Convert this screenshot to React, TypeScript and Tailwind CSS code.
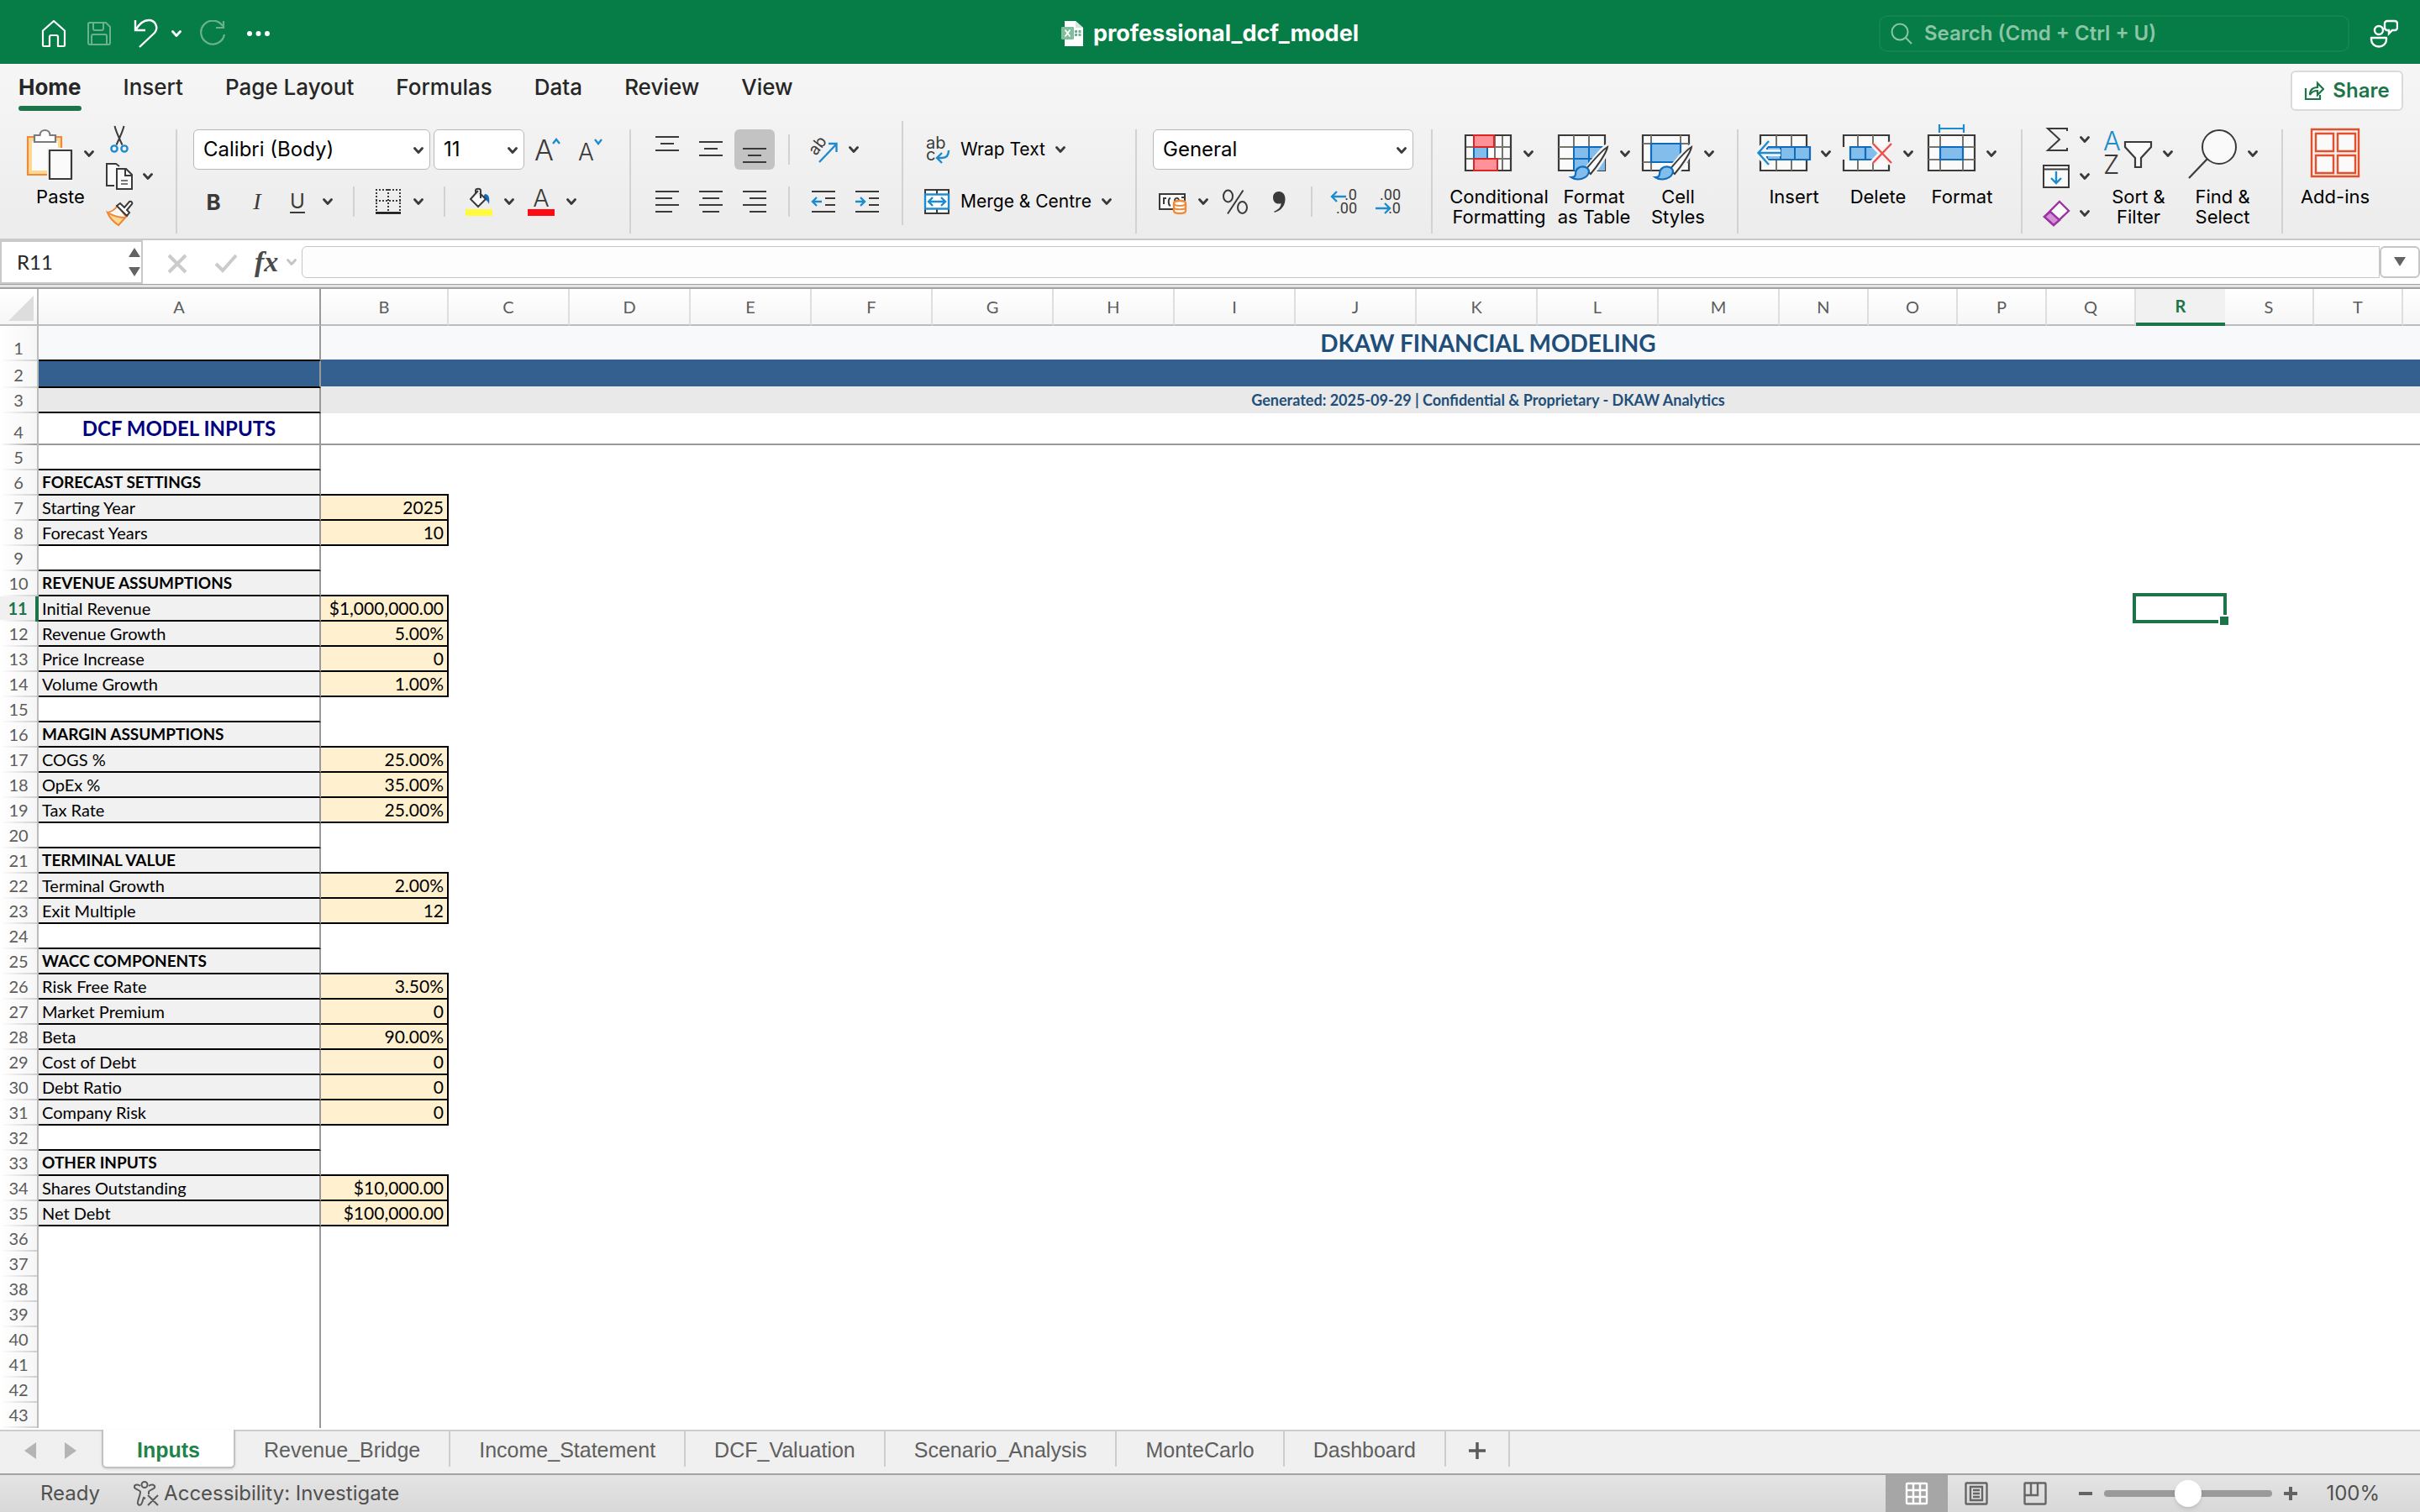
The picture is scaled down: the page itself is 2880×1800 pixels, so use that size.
import React from "react";

const INK = "#3b3a39";
const BLUE = "#1e8bcd";
const GREEN = "#1e7449";

type Kids = { children?: React.ReactNode };

/* ---------- shared pieces ---------- */

function Svg({ w = 32, h = 32, children }: { w?: number; h?: number } & Kids) {
  return (
    <svg width={w} height={h} viewBox={`0 0 ${w} ${h}`} fill="none" stroke={INK} strokeWidth={2} className="shrink-0 overflow-visible" aria-hidden="true">
      {children}
    </svg>
  );
}

function Chevron({ color = INK }: { color?: string }) {
  return (
    <svg width={12} height={10} viewBox="0 0 12 10" fill="none" stroke={color} strokeWidth={2.8} strokeLinecap="round" strokeLinejoin="round" className="shrink-0" aria-hidden="true">
      <path d="M1.500 2.500 6 7.500 10.500 2.500" />
    </svg>
  );
}

function Sep({ kind = "tall" }: { kind?: "tall" | "raised" | "short" }) {
  const cls = {
    tall: "mt-2.5 mb-1.5 w-0.5 shrink-0 bg-[#d2d2d2]",
    raised: "mb-4 w-0.5 shrink-0 bg-[#d2d2d2]",
    short: "h-9 w-0.5 shrink-0 bg-[#d2d2d2]",
  }[kind];
  return <div className={cls} />;
}

function Split({ label, children }: { label: string } & Kids) {
  return (
    <button aria-label={label} className="flex shrink-0 items-center gap-3.5">
      {children}
      <Chevron />
    </button>
  );
}

function Tool({ label, active = false, children }: { label: string; active?: boolean } & Kids) {
  return (
    <button
      aria-label={label}
      className={
        active
          ? "flex h-12 w-12 shrink-0 items-center justify-center rounded-md bg-[#c3c3c3]"
          : "flex h-12 w-12 shrink-0 items-center justify-center rounded-md"
      }
    >
      {children}
    </button>
  );
}

function Big({ lines, menu = true, wide = false, icon }: { lines: string[]; menu?: boolean; wide?: boolean; icon: React.ReactNode }) {
  return (
    <button className={wide ? "flex w-[126px] shrink-0 flex-col items-center" : "flex w-[100px] shrink-0 flex-col items-center"}>
      <span className="flex h-[78px] items-center gap-3">
        {icon}
        {menu && <Chevron />}
      </span>
      {lines.map((l) => (
        <span key={l} className="text-[22px] leading-6 whitespace-nowrap text-black">
          {l}
        </span>
      ))}
    </button>
  );
}

function Picker({ label, value, width }: { label: string; value: string; width: string }) {
  return (
    <div className={`relative shrink-0 ${width}`}>
      <select aria-label={label} defaultValue={value} className="h-12 w-full appearance-none rounded-md border border-[#b8b8b8] bg-white pl-[11px] text-2xl text-black">
        <option>{value}</option>
      </select>
      <span className="pointer-events-none absolute top-5 right-2">
        <Chevron />
      </span>
    </div>
  );
}

/* ---------- icons ---------- */

const PasteIcon = () => (
  <Svg w={56} h={72}>
    <path d="M1 16h40v45H1z" fill="#fbd993" stroke="#ee8a3a" strokeWidth={2.2} />
    <path d="M6 21h31v35H6z" fill="#fbfbfb" stroke="none" />
    <path d="M9 22v-8h6.500c0-8 12-8 12 0H34v8z" fill="#fff" stroke="#7a7a7a" strokeWidth={2.200} />
    <path d="M24 29h32v40H24z" fill="#f3f3f3" stroke="none" />
    <path d="M27 32h26v34H27z" fill="#fafafa" strokeWidth={2.2} />
  </Svg>
);

const CutIcon = () => (
  <Svg>
    <path d="M10.500 0c1 5 5 14 9 22.500M21.500 0c-1 5-5 14-9 22.500" />
    <circle cx={10} cy={27} r={3.600} stroke={BLUE} strokeWidth={2.4} />
    <circle cx={22} cy={27} r={3.600} stroke={BLUE} strokeWidth={2.4} />
  </Svg>
);

const CopyIcon = () => (
  <Svg>
    <path d="M10 27H1V1h11l4 3" fill="#fafafa" />
    <path d="M13 7h11l7 7v17H13z" fill="#fafafa" />
    <path d="M23 7v8h8" />
    <path d="M18 21h8M18 25h8" stroke="#777" />
  </Svg>
);

const BrushIcon = () => (
  <Svg>
    <path d="M14 7c-3 4-7 7-12 8 2 5 7 11 13 15l9-10z" fill="#fafafa" stroke="#ee8a3a" />
    <path d="M2 15c5 3 13 6 21 6l-8 9C9 26 4 20 2 15z" fill="#fbd993" stroke="#ee8a3a" />
    <path d="m13 7 4-3 5 5 6-7c2-1 4 1 3 3l-6 7 3 3-3 4z" fill="#fff" />
  </Svg>
);

const GrowIcon = ({ down = false }: { down?: boolean }) => (
  <Svg w={32} h={32}>
    <text x={0} y={29} fill={INK} stroke="none" fontSize={down ? 28 : 34} fontWeight={300} fontFamily="Inter">
      A
    </text>
    <path d={down ? "m20 4 4 5 4-5" : "m22 9 4-5 4 5"} stroke={BLUE} strokeWidth={2.4} />
  </Svg>
);

const BordersIcon = () => (
  <Svg>
    <path d="M2 1v26M30 1v26M1 2h30M16 1v26M1 15h30" strokeDasharray="2 2" />
    <path d="M1 29.500h30" stroke="#000" strokeWidth={2.400} />
  </Svg>
);

const FillIcon = () => (
  <Svg w={32} h={34}>
    <path d="M23 8c5 0 6 5 5 12-2-4-4-6-8-7z" fill="#0f6cbd" stroke="none" />
    <path d="M15 4 6 14l9 9 9-9-7-7M12 8V4c0-3 6-3 6 0v9" fill="#fafafa" />
    <rect x={0} y={26} width={32} height={8} fill="#fffb3c" stroke="none" />
  </Svg>
);

const FontColorIcon = () => (
  <Svg w={32} h={34}>
    <text x={16} y={23} textAnchor="middle" fill={INK} stroke="none" fontSize={29} fontWeight={300} fontFamily="Inter">
      A
    </text>
    <rect x={0} y={26} width={32} height={8} fill="#ff0a12" stroke="none" />
  </Svg>
);

const VAlignIcon = ({ shift = 0 }: { shift?: number }) => (
  <Svg w={28} h={48}>
    <path d={`M0 ${9 + shift}h28M6 ${17 + shift}h16M0 ${25 + shift}h28`} />
  </Svg>
);

const HAlignIcon = ({ short }: { short: number }) => (
  <Svg w={28} h={28}>
    <path d={`M0 2h28M${short} 10h20M0 18h28M${short} 26h20`} />
  </Svg>
);

const OrientIcon = () => (
  <Svg>
    <text x={0} y={0} transform="translate(7 24) rotate(-52)" fill={INK} stroke="none" fontSize={19} fontFamily="Inter">
      ab
    </text>
    <path d="M11 31 31 10M22 9h9.500v10" stroke={BLUE} strokeWidth={2.4} />
  </Svg>
);

const IndentIcon = ({ inward = false }: { inward?: boolean }) => (
  <Svg w={28} h={28}>
    <path d="M0 2h28M16 10h12M16 18h12M0 26h28" />
    <path d={inward ? "M0 14h11M6 9l5 5-5 5" : "M12 14H1M6 9l-5 5 5 5"} stroke={BLUE} strokeWidth={2.4} />
  </Svg>
);

const WrapIcon = () => (
  <Svg w={32} h={34}>
    <text x={3} y={16} fill={INK} stroke="none" fontSize={20} fontFamily="Inter">
      ab
    </text>
    <text x={3} y={30} fill={INK} stroke="none" fontSize={20} fontFamily="Inter">
      c
    </text>
    <path d="M30 18c0 6-3 9-8 9h-6M22 21l-6 6 6 6" stroke={BLUE} strokeWidth={2.4} />
  </Svg>
);

const MergeIcon = () => (
  <Svg>
    <path d="M2 2h28v28H2zM16 2v28" fill="#fafafa" />
    <rect x={2} y={7.500} width={28} height={17} fill="#fff" stroke={BLUE} strokeWidth={2.4} />
    <path d="M6 16h20M11 11l-5 5 5 5M21 11l5 5-5 5" stroke={BLUE} strokeWidth={2.4} />
  </Svg>
);

const MoneyIcon = () => (
  <Svg w={32} h={32}>
    <path d="M17 25H0V7h30v8" fill="#fafafa" />
    <path d="M5 19v-7h3M13 12c-3 0-3 8 0 9M18 15c0-4 4-4 5-1M26 11h3" />
    <path d="M17 18c0-4 14-4 14 0v9c0 4-14 4-14 0z" fill="#fff" stroke="#ee8a3a" strokeWidth={2.400} />
    <path d="M17 18c0 4 14 4 14 0M17 23c0 3 14 3 14 0" stroke="#ee8a3a" strokeWidth={2.2} />
  </Svg>
);

const PercentIcon = () => (
  <Svg>
    <ellipse cx={7.500} cy={9.500} rx={5.500} ry={7} />
    <ellipse cx={24.500} cy={23} rx={5.500} ry={7} />
    <path d="M25.500 2.500 7 30.500" />
  </Svg>
);

const CommaIcon = () => (
  <Svg>
    <path d="M15.500 4c5 0 8 3.500 8 9 0 8-5 14-13 16v-1.500c5-2 8-5 8-9.500-5 2-9.500-1-9.500-7 0-4 3-7 6.500-7z" fill={INK} stroke="none" />
  </Svg>
);

const DecimalIcon = ({ less = false }: { less?: boolean }) => (
  <Svg w={32} h={32}>
    <text x={31} y={14} textAnchor="end" fill={INK} stroke="none" fontSize={18} fontFamily="Roboto">
      {less ? ".00" : ".0"}
    </text>
    <text x={31} y={30} textAnchor="end" fill={INK} stroke="none" fontSize={18} fontFamily="Roboto">
      {less ? ".0" : ".00"}
    </text>
    <path d={less ? "M1 24h16M12 18l6 6-6 6" : "M18 10H1M7 4l-6 6 6 6"} stroke={BLUE} strokeWidth={2.4} />
  </Svg>
);

const CondIcon = () => (
  <Svg w={58} h={72}>
    <path d="M1 14h54v42H1z" fill="#fafafa" />
    <path d="M1 28h54M1 42h54M11 14v42M36 14v42M45 14v42" stroke="#76746c" />
    <path d="M1 14h54v42H1z" strokeWidth={2.200} />
    <path d="M11 28h16v14H11z" fill="#83bdec" stroke="#0f6cbd" />
    <path d="M11 14h24v14H11zM11 42h28v14H11z" fill="#ff9298" stroke="#dc2626" />
  </Svg>
);

const PaintBrush = () => (
  <>
    <path d="M60 27c-6 3-21 22-26 29l5 4c7-7 20-27 21-33z" fill="#fafafa" stroke="#f2f2f2" strokeWidth={7} />
    <path d="M59 28c-7 4-20 20-26 27l6 5c7-8 19-25 20-32z" fill="#fafafa" />
    <path d="M33 52c-7-2-12 2-12 8 0 3-2 4-5 4 7 5 20 2 21-7 0-3-2-4-4-5z" fill="#83bdec" stroke="#0f6cbd" strokeWidth={2.2} />
  </>
);

const TableIcon = () => (
  <Svg w={62} h={72}>
    <path d="M1 14h55v42H1z" fill="#fafafa" strokeWidth={2.2} />
    <path d="M19 28h37v28H19z" fill="#83bdec" stroke="none" />
    <path d="M1 28h18M1 42h18M19 14v14M37 14v14" stroke="#76746c" />
    <path d="M19 56V28h37M19 42h37M37 28v28" stroke="#0f6cbd" />
    <PaintBrush />
  </Svg>
);

const StylesIcon = () => (
  <Svg w={62} h={72}>
    <path d="M1 14h55v42H1z" fill="#fafafa" strokeWidth={2.2} />
    <path d="M1 24h55M1 46h55M11 14v42M46 14v42" stroke="#76746c" />
    <path d="M11 24h35v22H11z" fill="#83bdec" stroke="#0f6cbd" strokeWidth={2.2} />
    <PaintBrush />
  </Svg>
);

const InsertIcon = () => (
  <Svg w={64} h={72}>
    <path d="M4 28V14h55v14M4 42v14h55V42" fill="#fafafa" strokeWidth={2.2} />
    <path d="M23 14v14M41 14v14M23 43v13M41 43v13" stroke="#76746c" />
    <path d="M12 28h51v15H12z" fill="#83bdec" stroke="#0f6cbd" strokeWidth={2.2} />
    <path d="M28 28v15M45 28v15" stroke="#0f6cbd" />
    <path d="M14 20 1 35l13 15M1 35h27" stroke="#f4f4f4" strokeWidth={8} />
    <path d="M14 21 1.500 35 14 49M2 35h26" stroke={BLUE} strokeWidth={2.4} />
  </Svg>
);

const DeleteIcon = () => (
  <Svg w={60} h={72}>
    <path d="M1 28V14h54v14M1 43v13h54V43" fill="#fafafa" strokeWidth={2.2} />
    <path d="M18 14v14M36 14v14M18 43v13M36 43v13" stroke="#76746c" />
    <path d="M8 28h28l8 7-8 8H8z" fill="#83bdec" stroke="none" />
    <path d="M36 28H9v15h27M27 28v15" stroke="#0f6cbd" strokeWidth={2.2} />
    <path d="m36 24 22 23M58 24 36 47" stroke="#f4f4f4" strokeWidth={8} />
    <path d="m36 24 22 23M58 24 36 47" stroke="#f04b4b" strokeWidth={2.4} />
  </Svg>
);

const FormatIcon = () => (
  <Svg w={58} h={72}>
    <path d="M14 6h29M14 1v10M43 1v10" stroke={BLUE} strokeWidth={2.2} />
    <path d="M1 14h55v42H1z" fill="#fafafa" strokeWidth={2.2} />
    <path d="M1 28h55M1 43h55M15 14v42M42 14v42" stroke="#76746c" />
    <path d="M15 28h27v15H15z" fill="#83bdec" stroke="#0f6cbd" strokeWidth={2.2} />
  </Svg>
);

const SigmaIcon = () => (
  <Svg>
    <path d="M29 6V3H6l14 13L6 29h23v-3" />
  </Svg>
);

const FillDownIcon = () => (
  <Svg>
    <path d="M1 3h30v26H1zM1 7.500h30" fill="#fafafa" />
    <path d="M16 10v14M10 18l6 6 6-6" stroke={BLUE} strokeWidth={2.4} />
  </Svg>
);

const EraserIcon = () => (
  <Svg>
    <path d="M20 2 31 13 13 30 2 20z" fill="#fafafa" stroke="#9a349f" strokeWidth={2.400} />
    <path d="m9 14 11 10-7 6L2 20z" fill="#d88fdb" stroke="#9a349f" strokeWidth={2.400} />
  </Svg>
);

const SortIcon = () => (
  <Svg w={58} h={72}>
    <text x={-1} y={32} fill={BLUE} stroke="none" fontSize={31} fontWeight={300} fontFamily="Inter">
      A
    </text>
    <text x={-1} y={60} fill={INK} stroke="none" fontSize={31} fontWeight={300} fontFamily="Inter">
      Z
    </text>
    <path d="M25 22h31v6L44 41v11h-7V41L25 28z" fill="#fafafa" strokeWidth={2.2} />
  </Svg>
);

const FindIcon = () => (
  <Svg w={60} h={72}>
    <circle cx={38} cy={28} r={20} fill="#fafafa" />
    <path d="M24 42 2 65" strokeWidth={2.2} />
  </Svg>
);

const AddinsIcon = () => (
  <Svg w={60} h={72}>
    <path d="M2 7h56v56H2z" stroke="#e2512c" strokeWidth={2.4} />
    <path d="M7 12h21v21H7zM33 12h21v21H33zM7 38h21v21H7zM33 38h21v21H33z" fill="#fafafa" stroke="#e2512c" strokeWidth={2.4} />
  </Svg>
);

/* ---------- title bar ---------- */

function TitleBar() {
  return (
    <header className="grid h-[76px] grid-cols-[1fr_auto_1fr] items-center bg-[#067d46] pt-1 text-white">
      <div className="flex items-center pl-12">
        <button aria-label="Home" className="mr-[22px]">
          <svg width={32} height={34} viewBox="0 0 32 34" fill="none" stroke="#fff" strokeWidth={2.2} strokeLinejoin="round">
            <path d="M3 13.500 16 2l13 11.500V31a1 1 0 0 1-1 1h-7V21c0-1-1-2-2-2h-6c-1 0-2 1-2 2v11H4a1 1 0 0 1-1-1z" />
          </svg>
        </button>
        <button aria-label="Save" className="mr-6 opacity-40">
          <svg width={32} height={32} viewBox="0 0 32 32" fill="none" stroke="#fff" strokeWidth={2}>
            <path d="M4 3h20l5 5v19a2 2 0 0 1-2 2H5a2 2 0 0 1-2-2V4zM9 3v7a2 2 0 0 0 2 2h8a2 2 0 0 0 2-2V3M7 29V19a2 2 0 0 1 2-2h14a2 2 0 0 1 2 2v10" />
          </svg>
        </button>
        <button aria-label="Undo" className="flex items-center gap-3.5">
          <svg width={32} height={36} viewBox="0 0 32 36" fill="none" stroke="#fff" strokeWidth={2.4}>
            <path d="M3 2v12h12M3.500 13.500C8 6 13 2 19 2c8 0 12 9 7 15L8 34" />
          </svg>
          <Chevron color="#fff" />
        </button>
        <button aria-label="Redo" className="ml-5 opacity-40">
          <svg width={36} height={32} viewBox="0 0 36 32" fill="none" stroke="#fff" strokeWidth={2.2}>
            <path d="M29 7A14 14 0 1 0 31 17M30 1v8h-9" />
          </svg>
        </button>
        <button aria-label="More" className="ml-5">
          <svg width={32} height={8} viewBox="0 0 32 8" fill="#fff">
            <circle cx={5} cy={4} r={3} />
            <circle cx={15.500} cy={4} r={3} />
            <circle cx={26} cy={4} r={3} />
          </svg>
        </button>
      </div>
      <h1 className="flex items-center gap-3 text-[27px] font-bold">
        <svg width={26} height={30} viewBox="0 0 26 30" aria-hidden="true">
          <path d="M4 0h13l9 8v22H4z" fill="#fff" />
          <path d="M17 0v8h9z" fill="#d6e6dd" />
          <path d="M16 11h3v3h-3zM20.500 11h3v3h-3zM16 15h3v3h-3zM20.500 15h3v3h-3z" fill="#6fb08e" />
          <rect y={7} width={15} height={15} rx={1} fill="#7fbd9c" />
          <path d="m4.500 10.500 6 8M10.500 10.500l-6 8" stroke="#fff" strokeWidth={1.800} />
        </svg>
        professional_dcf_model
      </h1>
      <div className="flex items-center justify-end gap-6 pr-[26px]">
        <label className="flex h-11 w-[560px] items-center gap-3.5 rounded-[10px] border-2 border-[#15854f] px-3">
          <svg width={26} height={26} viewBox="0 0 26 26" fill="none" stroke="#8cc5a6" strokeWidth={2} aria-hidden="true">
            <circle cx={11} cy={11} r={9.500} />
            <path d="m18 18 7 7" />
          </svg>
          <input type="search" aria-label="Search" placeholder="Search (Cmd + Ctrl + U)" className="min-w-0 flex-1 bg-transparent text-2xl font-semibold outline-none placeholder:text-[#8cc5a6]" />
        </label>
        <button aria-label="Presence">
          <svg width={34} height={34} viewBox="0 0 34 34" fill="none" stroke="#fff" strokeWidth={2.4}>
            <circle cx={11} cy={13} r={5} />
            <path d="M2 22h18v2c0 5-4 8.500-9 8.500S2 29 2 24z" strokeLinejoin="round" />
            <path d="M21 2h9a3 3 0 0 1 3 3v5a3 3 0 0 1-3 3h-3l-4 4v-4h-2a3 3 0 0 1-3-3V5a3 3 0 0 1 3-3z" />
          </svg>
        </button>
      </div>
    </header>
  );
}

/* ---------- ribbon ---------- */

const MENU = ["Home", "Insert", "Page Layout", "Formulas", "Data", "Review", "View"];

function MenuTabs() {
  return (
    <div className="flex h-[68px] items-end justify-between pr-5 pb-3 pl-[22px]">
      <nav className="flex gap-[50px] text-[26px] text-[#262626]">
        {MENU.map((m) =>
          m === "Home" ? (
            <button key={m} aria-current="page" className="flex h-[46px] flex-col justify-between font-bold">
              <span className="leading-9">{m}</span>
              <span className="h-1.5 w-full rounded-full bg-[#1e7449]" />
            </button>
          ) : (
            <button key={m} className="flex h-[46px] items-start leading-9 font-medium">
              {m}
            </button>
          ),
        )}
      </nav>
      <button className="flex h-12 w-[134px] items-center justify-center gap-2.5 rounded-md border-2 border-[#dadada] bg-white text-2xl font-semibold text-[#1e7449]">
        <svg width={24} height={24} viewBox="0 0 24 24" fill="none" stroke={GREEN} strokeWidth={2.2} aria-hidden="true">
          <path d="M2 9v13h17v-5M7 17c0-6 3-9 9-9v-5l7 7-7 7v-5c-4 0-7 1-9 5z" />
        </svg>
        Share
      </button>
    </div>
  );
}

function Rows({ className, children }: { className: string } & Kids) {
  return <div className={`flex shrink-0 flex-col gap-3.5 pt-2.5 ${className}`}>{children}</div>;
}

function Row({ children }: Kids) {
  return <div className="flex h-12 items-center">{children}</div>;
}

function Ribbon() {
  return (
    <div className="flex h-[140px] overflow-hidden pl-[22px]">
      <Big lines={["Paste"]} icon={<PasteIcon />} />
      <div className="flex w-[87px] shrink-0 flex-col pl-1">
        <button aria-label="Cut" className="flex h-11 items-center">
          <CutIcon />
        </button>
        <button aria-label="Copy" className="flex h-11 items-center gap-3">
          <CopyIcon />
          <Chevron />
        </button>
        <button aria-label="Format Painter" className="flex h-11 items-center">
          <BrushIcon />
        </button>
      </div>
      <Sep />

      <Rows className="pr-[21px] pl-[19px]">
        <Row>
          <div className="flex gap-1">
            <Picker label="Font" value="Calibri (Body)" width="w-[282px]" />
            <Picker label="Font size" value="11" width="w-[108px]" />
            <Tool label="Increase font size">
              <GrowIcon />
            </Tool>
            <Tool label="Decrease font size">
              <GrowIcon down />
            </Tool>
          </div>
        </Row>
        <Row>
          <div className="mr-2 flex gap-1 text-[26px] text-[#3b3a39]">
            <Tool label="Bold">
              <b>B</b>
            </Tool>
            <Tool label="Italic">
              <i className="font-['Liberation_Serif'] text-[28px]">I</i>
            </Tool>
          </div>
          <Split label="Underline">
            <span className="w-8 text-center text-2xl text-[#3b3a39] underline decoration-2 underline-offset-4">U</span>
          </Split>
          <div className="mx-6">
            <Sep kind="short" />
          </div>
          <Split label="Borders">
            <BordersIcon />
          </Split>
          <div className="mx-6">
            <Sep kind="short" />
          </div>
          <div className="flex gap-4">
            <Split label="Fill colour">
              <FillIcon />
            </Split>
            <Split label="Font colour">
              <FontColorIcon />
            </Split>
          </div>
        </Row>
      </Rows>
      <Sep />

      <Rows className="pr-[17px] pl-[19px]">
        <Row>
          <div className="flex gap-1">
            <Tool label="Align top">
              <VAlignIcon />
            </Tool>
            <Tool label="Align middle">
              <VAlignIcon shift={6} />
            </Tool>
            <Tool label="Align bottom" active>
              <VAlignIcon shift={14} />
            </Tool>
          </div>
          <div className="mr-6 ml-4">
            <Sep kind="short" />
          </div>
          <Split label="Orientation">
            <OrientIcon />
          </Split>
        </Row>
        <Row>
          <div className="flex gap-1">
            <Tool label="Align left">
              <HAlignIcon short={0} />
            </Tool>
            <Tool label="Centre">
              <HAlignIcon short={4} />
            </Tool>
            <Tool label="Align right">
              <HAlignIcon short={8} />
            </Tool>
          </div>
          <div className="mx-4">
            <Sep kind="short" />
          </div>
          <div className="flex gap-1">
            <Tool label="Decrease indent">
              <IndentIcon />
            </Tool>
            <Tool label="Increase indent">
              <IndentIcon inward />
            </Tool>
          </div>
        </Row>
      </Rows>
      <Sep kind="raised" />

      <Rows className="w-[276px] pl-6 text-[21px] text-black">
        <Row>
          <button className="flex items-center gap-3">
            <WrapIcon />
            Wrap Text
            <Chevron />
          </button>
        </Row>
        <Row>
          <button className="flex items-center gap-3 whitespace-nowrap">
            <MergeIcon />
            Merge &amp; Centre
            <Chevron />
          </button>
        </Row>
      </Rows>
      <Sep />

      <Rows className="pr-[21px] pl-[19px]">
        <Row>
          <Picker label="Number format" value="General" width="w-[310px]" />
        </Row>
        <Row>
          <div className="px-2">
            <Split label="Accounting format">
              <MoneyIcon />
            </Split>
          </div>
          <div className="flex gap-1">
            <Tool label="Percent style">
              <PercentIcon />
            </Tool>
            <Tool label="Comma style">
              <CommaIcon />
            </Tool>
          </div>
          <div className="mx-3.5">
            <Sep kind="short" />
          </div>
          <div className="flex gap-1">
            <Tool label="Increase decimal">
              <DecimalIcon />
            </Tool>
            <Tool label="Decrease decimal">
              <DecimalIcon less />
            </Tool>
          </div>
        </Row>
      </Rows>
      <Sep />

      <div className="flex shrink-0 pr-5 pl-4">
        <Big lines={["Conditional", "Formatting"]} wide icon={<CondIcon />} />
        <Big lines={["Format", "as Table"]} icon={<TableIcon />} />
        <Big lines={["Cell", "Styles"]} icon={<StylesIcon />} />
      </div>
      <Sep />

      <div className="flex shrink-0 pr-5 pl-4">
        <Big lines={["Insert"]} icon={<InsertIcon />} />
        <Big lines={["Delete"]} icon={<DeleteIcon />} />
        <Big lines={["Format"]} icon={<FormatIcon />} />
      </div>
      <Sep />

      <div className="flex shrink-0 flex-col pr-2 pl-6">
        <button aria-label="AutoSum" className="flex h-11 items-center gap-3">
          <SigmaIcon />
          <Chevron />
        </button>
        <button aria-label="Fill" className="flex h-11 items-center gap-3">
          <FillDownIcon />
          <Chevron />
        </button>
        <button aria-label="Clear" className="flex h-11 items-center gap-3">
          <EraserIcon />
          <Chevron />
        </button>
      </div>
      <div className="flex shrink-0 pr-5">
        <Big lines={["Sort &", "Filter"]} icon={<SortIcon />} />
        <Big lines={["Find &", "Select"]} icon={<FindIcon />} />
      </div>
      <Sep />
      <div className="flex shrink-0 pl-3">
        <Big lines={["Add-ins"]} menu={false} icon={<AddinsIcon />} />
      </div>
    </div>
  );
}

/* ---------- formula bar ---------- */

function FormulaBar() {
  return (
    <div className="flex h-[52px] items-stretch bg-white">
      <div className="flex w-[170px] items-center border-2 border-[#c9c9c9]">
        <input aria-label="Name box" defaultValue="R11" className="min-w-0 flex-1 bg-transparent pl-[18px] font-['Lato'] text-2xl text-[#262626] outline-none" />
        <svg width={16} height={36} viewBox="0 0 16 36" fill="#636363" aria-hidden="true">
          <path d="M1 12 8 1l7 11zM1 24l7 11 7-11z" />
        </svg>
      </div>
      <div className="flex items-center gap-8 pt-1 pl-[29px]">
        <button aria-label="Cancel">
          <svg width={24} height={24} viewBox="0 0 24 24" stroke="#cbcbcb" strokeWidth={4}>
            <path d="m2 2 20 20M22 2 2 22" />
          </svg>
        </button>
        <button aria-label="Enter">
          <svg width={28} height={24} viewBox="0 0 28 24" fill="none" stroke="#cbcbcb" strokeWidth={4}>
            <path d="m2 12 8 8L26 2" />
          </svg>
        </button>
      </div>
      <button aria-label="Insert function" className="flex items-center gap-2.5 pr-1.5 pl-5">
        <i className="font-['Liberation_Serif'] text-[34px] leading-none font-bold text-[#4a4a4a]">fx</i>
        <Chevron color="#c4c4c4" />
      </button>
      <input aria-label="Formula" className="my-[7px] min-w-0 flex-1 rounded-l-md border border-[#c6c6c6] bg-[#fdfdfd] px-2 font-['Lato'] text-2xl outline-none" />
      <button aria-label="Expand formula bar" className="my-[7px] flex w-12 items-center justify-center rounded-md border-2 border-[#c6c6c6]">
        <svg width={14} height={12} viewBox="0 0 14 12" fill="#636363">
          <path d="M0 0h14L7 11z" />
        </svg>
      </button>
    </div>
  );
}

/* ---------- worksheet ---------- */

const WIDE = "CDEFGHIJKLM".split("");
const NARROW = "NOPQRST".split("");

type Line = { n: number; label?: string; value?: string; head?: boolean };

const section = (start: number, title: string, items: [string, string][]): Line[] => [
  { n: start, label: title, head: true },
  ...items.map(([label, value], i) => ({ n: start + 1 + i, label, value })),
  { n: start + 1 + items.length },
];

const LINES: Line[] = [
  { n: 5 },
  ...section(6, "FORECAST SETTINGS", [
    ["Starting Year", "2025"],
    ["Forecast Years", "10"],
  ]),
  ...section(10, "REVENUE ASSUMPTIONS", [
    ["Initial Revenue", "$1,000,000.00"],
    ["Revenue Growth", "5.00%"],
    ["Price Increase", "0"],
    ["Volume Growth", "1.00%"],
  ]),
  ...section(16, "MARGIN ASSUMPTIONS", [
    ["COGS %", "25.00%"],
    ["OpEx %", "35.00%"],
    ["Tax Rate", "25.00%"],
  ]),
  ...section(21, "TERMINAL VALUE", [
    ["Terminal Growth", "2.00%"],
    ["Exit Multiple", "12"],
  ]),
  ...section(25, "WACC COMPONENTS", [
    ["Risk Free Rate", "3.50%"],
    ["Market Premium", "0"],
    ["Beta", "90.00%"],
    ["Cost of Debt", "0"],
    ["Debt Ratio", "0"],
    ["Company Risk", "0"],
  ]),
  ...section(33, "OTHER INPUTS", [
    ["Shares Outstanding", "$10,000.00"],
    ["Net Debt", "$100,000.00"],
  ]),
  ...[37, 38, 39, 40, 41, 42, 43].map((n) => ({ n })),
];

const colHead = "border-b-2 border-b-[#bcbcbc] border-r-2 border-r-[#dedede] bg-linear-to-b from-white to-[#f6f6f6] p-0 text-center font-normal";

function RowHead({ n, freeze = false }: { n: number; freeze?: boolean }) {
  const on = n === 11;
  return (
    <th
      scope="row"
      className={
        on
          ? "border-r-4 border-[#1e7449] bg-[#f0f0f0] p-0 text-center align-bottom font-bold text-[#1e7449]"
          : "border-r-2 border-[#bcbcbc] bg-linear-to-r from-white to-[#f6f6f6] p-0 text-center align-bottom font-normal"
      }
    >
      <div className="flex h-full flex-col justify-end">
        <span className="leading-7">{n}</span>
        <span className={freeze ? "h-0.5 bg-linear-to-r from-white to-[#999999]" : "h-0.5 bg-linear-to-r from-white to-[#cfcfcf]"} />
      </div>
    </th>
  );
}

const aCell = "border-r-2 border-r-[#999999] p-0 whitespace-nowrap";

function Sheet() {
  return (
    <div className="flex-1 overflow-hidden bg-white">
      <table className="w-[3160px] table-fixed border-separate border-spacing-0 font-['Lato'] text-xl text-black">
        <colgroup>
          <col className="w-[46px]" />
          <col className="w-[336px]" />
          <col className="w-[152px]" />
          {WIDE.map((c) => (
            <col key={c} className="w-[144px]" />
          ))}
          {NARROW.map((c) => (
            <col key={c} className="w-[106px]" />
          ))}
          <col />
        </colgroup>
        <thead className="text-[#5c5c5c]">
          <tr className="h-11">
            <td className="border-r-2 border-b-2 border-[#bcbcbc] bg-linear-to-b from-white to-[#f6f6f6] p-0 align-bottom">
              <svg width={30} height={30} viewBox="0 0 30 30" className="mb-1 ml-2.5 block" aria-hidden="true">
                <path d="M30 0v30H0z" fill="#dddddd" />
              </svg>
            </td>
            <th className="border-r-2 border-b-2 border-r-[#999999] border-b-[#bcbcbc] bg-linear-to-b from-white to-[#f6f6f6] p-0 text-center font-normal">A</th>
            {["B", ...WIDE, ...NARROW].map((c) =>
              c === "R" ? (
                <th key={c} className="border-b-4 border-[#1e7449] bg-[#f1f1f1] p-0 text-center font-bold text-[#1e7449]">
                  {c}
                </th>
              ) : (
                <th key={c} className={colHead}>
                  {c}
                </th>
              ),
            )}
            <th className={colHead} />
          </tr>
        </thead>
        <tbody className="text-[#5c5c5c]">
          <tr className="h-[42px]">
            <RowHead n={1} />
            <td className={`${aCell} border-b-2 border-b-black bg-[#f8f9fb]`} />
            <td colSpan={20} className="border-b-2 border-[#33608f] bg-[#f8f9fb] p-0 text-center text-[28px] leading-9 font-bold text-[#1f4e79]">
              DKAW FINANCIAL MODELING
            </td>
          </tr>
          <tr className="h-8">
            <RowHead n={2} />
            <td className={`${aCell} border-b-2 border-b-black bg-[#33608f]`} />
            <td colSpan={20} className="border-b-2 border-[#e9e9e9] bg-[#33608f] p-0" />
          </tr>
          <tr className="h-[30px]">
            <RowHead n={3} />
            <td className={`${aCell} border-b-2 border-b-black bg-[#e9e9e9]`} />
            <td colSpan={20} className="bg-[#e9e9e9] p-0 text-center align-top text-lg leading-7 font-bold text-[#1f4e79]">
              Generated: 2025-09-29 | Confidential &amp; Proprietary - DKAW Analytics
            </td>
          </tr>
          <tr className="h-[38px]">
            <RowHead n={4} freeze />
            <td className={`${aCell} border-b-2 border-b-[#999999] text-center text-2xl leading-9 font-bold text-[#000080]`}>DCF MODEL INPUTS</td>
            <td colSpan={20} className="border-b-2 border-[#999999] p-0" />
          </tr>
          {LINES.map((line, i) => {
            const next = LINES[i + 1];
            const boxed = line.n <= 35;
            const bBottom = line.value !== undefined || next?.value !== undefined;
            return (
              <tr key={line.n} className="h-[30px]">
                <RowHead n={line.n} />
                <td
                  className={[
                    aCell,
                    "pl-1 leading-7 text-black",
                    boxed ? "border-b-2 border-b-black" : "",
                    line.label ? "bg-[#f1f1f1]" : "",
                    line.head ? "text-[19px] font-bold" : "",
                  ].join(" ")}
                >
                  {line.label}
                </td>
                <td
                  className={[
                    "p-0 text-right text-[21px] leading-7 text-black",
                    bBottom ? "border-b-2 border-black" : "",
                    line.value ? "border-r-2 border-black bg-[#fff1d0] pr-1" : "",
                  ].join(" ")}
                >
                  {line.value}
                </td>
                {line.n === 11 ? (
                  <>
                    <td colSpan={15} className="p-0" />
                    <td className="relative p-0">
                      <div className="absolute -top-1 -right-0.5 -bottom-0.5 -left-1 border-4 border-[#1e7449]" />
                      <div className="absolute -right-1.5 -bottom-1.5 h-3.5 w-3.5 border-2 border-white bg-[#1e7449]" />
                    </td>
                    <td colSpan={3} className="p-0" />
                  </>
                ) : (
                  <td colSpan={19} className="p-0" />
                )}
              </tr>
            );
          })}
        </tbody>
      </table>
    </div>
  );
}

/* ---------- bottom bars ---------- */

const TABS = ["Revenue_Bridge", "Income_Statement", "DCF_Valuation", "Scenario_Analysis", "MonteCarlo", "Dashboard"];

function SheetTabs() {
  return (
    <div className="flex h-[54px] items-start border-b-2 border-[#a3a3a3] bg-[#f0f0f0] font-['Liberation_Sans'] text-[25px] text-[#5f5f5f]">
      <div className="flex h-11 w-[121px] items-center gap-8 border-t-2 border-[#cdcdcd] pt-1 pl-7">
        <button aria-label="Previous sheet">
          <svg width={16} height={20} viewBox="0 0 16 20" fill="#b4b4b4">
            <path d="M15 0v20L1 10z" />
          </svg>
        </button>
        <button aria-label="Next sheet">
          <svg width={16} height={20} viewBox="0 0 16 20" fill="#b4b4b4">
            <path d="M1 0v20l14-10z" />
          </svg>
        </button>
      </div>
      <button className="h-[46px] rounded-b-md border-x-2 border-b-2 border-[#c2c2c2] bg-white px-10 pt-1.5 font-bold text-[#1e8449] shadow-sm">Inputs</button>
      <div className="flex h-11 flex-1 border-t-2 border-[#cdcdcd]">
        {TABS.map((t) => (
          <button key={t} className="border-r-2 border-[#cdcdcd] px-[34px] pt-1">
            {t}
          </button>
        ))}
        <button aria-label="New sheet" className="flex w-[76px] items-center justify-center border-r-2 border-[#cdcdcd] pt-1">
          <svg width={20} height={20} viewBox="0 0 20 20" stroke="#5a5a5a" strokeWidth={3.500}>
            <path d="M10 0v20M0 10h20" />
          </svg>
        </button>
      </div>
    </div>
  );
}

function StatusBar() {
  return (
    <footer className="flex h-11 items-center justify-between bg-linear-to-b from-[#e4e4e4] to-[#d8d8d8] pr-12 pl-12 text-2xl text-[#505050]">
      <div className="flex items-center">
        <span>Ready</span>
        <button className="ml-10 flex items-center gap-1.5">
          <svg width={30} height={30} viewBox="0 0 30 30" fill="none" stroke="#5a5a5a" strokeWidth={2} aria-hidden="true">
            <circle cx={13} cy={4.500} r={3.500} />
            <path d="M8 6C4 3 0 5 1 8c1 2 7 3 7 5 0 5-4 11-3 14s4 2 5-1l2-6 2 1M18 6c4-3 8-1 7 2-1 2-7 3-7 5v3M17 17l12 12M29 17 17 29" />
          </svg>
          Accessibility: Investigate
        </button>
      </div>
      <div className="flex h-full items-center">
        <button aria-label="Normal view" className="flex h-full w-[74px] items-center justify-center bg-[#a6a6a6]">
          <svg width={28} height={28} viewBox="0 0 28 28" fill="none" stroke="#fff" strokeWidth={2.4}>
            <rect x={2} y={2} width={24} height={24} rx={1} />
            <path d="M10 2v24M18 2v24M2 10h24M2 18h24" />
          </svg>
        </button>
        <div className="flex items-center gap-[42px] pl-5">
          <button aria-label="Page layout view">
            <svg width={28} height={28} viewBox="0 0 28 28" fill="none" stroke="#656565" strokeWidth={2.4}>
              <rect x={1.500} y={1.500} width={25} height={25} rx={1} />
              <path d="M7 6h14v16H7zM10 10h8M10 14h8M10 18h8" />
            </svg>
          </button>
          <button aria-label="Page break view">
            <svg width={28} height={28} viewBox="0 0 28 28" fill="none" stroke="#656565" strokeWidth={2.4}>
              <rect x={1.500} y={1.500} width={25} height={25} rx={1} />
              <path d="M2 16h15V2M9 2v14" />
            </svg>
          </button>
        </div>
        <div className="flex items-center gap-3.5 pr-[34px] pl-[38px]">
          <button aria-label="Zoom out">
            <svg width={16} height={16} viewBox="0 0 16 16" stroke="#636363" strokeWidth={4}>
              <path d="M0 8h16" />
            </svg>
          </button>
          <input
            type="range"
            aria-label="Zoom"
            defaultValue={50}
            className="h-2 w-[200px] appearance-none rounded-full bg-[#9a9a9a] [&::-webkit-slider-thumb]:h-8 [&::-webkit-slider-thumb]:w-8 [&::-webkit-slider-thumb]:appearance-none [&::-webkit-slider-thumb]:rounded-full [&::-webkit-slider-thumb]:bg-white [&::-webkit-slider-thumb]:shadow-md"
          />
          <button aria-label="Zoom in">
            <svg width={16} height={16} viewBox="0 0 16 16" stroke="#636363" strokeWidth={4}>
              <path d="M0 8h16M8 0v16" />
            </svg>
          </button>
        </div>
        <span>100%</span>
      </div>
    </footer>
  );
}

export default function App() {
  return (
    <div className="flex h-screen flex-col overflow-hidden bg-white font-['Inter',sans-serif]">
      <TitleBar />
      <div className="border-b-2 border-[#c9c9c9] bg-linear-to-b from-[#f6f6f6] to-[#ececec]">
        <MenuTabs />
        <Ribbon />
      </div>
      <FormulaBar />
      <div className="h-1.5 border-t border-b-2 border-[#a2a2a2] bg-[#e4e4e4]" />
      <Sheet />
      <SheetTabs />
      <StatusBar />
    </div>
  );
}
